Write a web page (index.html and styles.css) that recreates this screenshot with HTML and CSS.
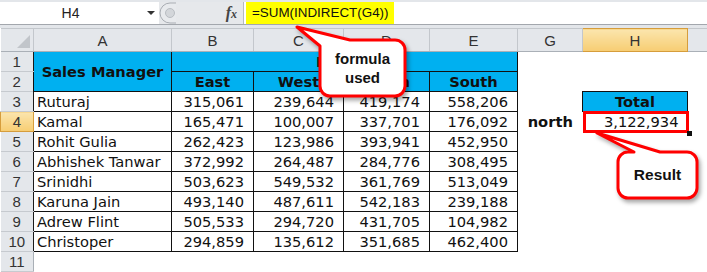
FILE: index.html
```html
<!DOCTYPE html>
<html lang="en">

<head>
    <meta charset="utf-8">
    <title>INDIRECT</title>
    <link rel="stylesheet" href="styles.css">
</head>

<body>

    <div class="bar">
        <div class="fline">
            <div class="namebox">
                <span class="ref">H4</span>
                <span class="drop"></span>
            </div>
            <div class="split">
                <svg class="grip" width="18" height="22" viewBox="0 0 18 22">
                    <path d="M17 1 H11 A10 10 0 0 0 11 21 H17" fill="#e8eaed" stroke="#a9adb3" />
                    <circle cx="11" cy="11" r="4.5" fill="#d3d6da" stroke="#b9bdc2" />
                </svg>
                <span class="fx">f<small>x</small></span>
            </div>
            <div class="finput"><span class="hl">=SUM(INDIRECT(G4))</span></div>
        </div>
    </div>

    <table class="sheet">
        <colgroup>
            <col class="c-rh">
            <col class="c-a">
            <col class="c-b">
            <col class="c-c">
            <col class="c-d">
            <col class="c-e">
            <col class="c-g">
            <col class="c-h">
            <col class="c-i">
        </colgroup>
        <thead>
            <tr class="colhead">
                <th class="corner"></th>
                <th>A</th>
                <th>B</th>
                <th>C</th>
                <th>D</th>
                <th>E</th>
                <th>G</th>
                <th class="sel">H</th>
                <th></th>
            </tr>
        </thead>
        <tbody>
            <tr>
                <th>1</th>
                <td class="hdr" rowspan="2">Sales Manager</td>
                <td class="hdr" colspan="4">Region</td>
                <td></td><td></td><td></td>
            </tr>
            <tr>
                <th>2</th>
                <td class="hdr">East</td>
                <td class="hdr">West</td>
                <td class="hdr">North</td>
                <td class="hdr">South</td>
                <td></td><td></td><td></td>
            </tr>
            <tr>
                <th>3</th>
                <td class="name">Ruturaj</td>
                <td class="num">315,061</td>
                <td class="num">239,644</td>
                <td class="num">419,174</td>
                <td class="num">558,206</td>
                <td></td>
                <td class="hdr total">Total</td>
                <td></td>
            </tr>
            <tr>
                <th class="sel">4</th>
                <td class="name">Kamal</td>
                <td class="num">165,471</td>
                <td class="num">100,007</td>
                <td class="num">337,701</td>
                <td class="num">176,092</td>
                <td class="lbl">north</td>
                <td class="free result">3,122,934</td>
                <td></td>
            </tr>
            <tr>
                <th>5</th>
                <td class="name">Rohit Gulia</td>
                <td class="num">262,423</td>
                <td class="num">123,986</td>
                <td class="num">393,941</td>
                <td class="num">452,950</td>
                <td></td><td></td><td></td>
            </tr>
            <tr>
                <th>6</th>
                <td class="name">Abhishek Tanwar</td>
                <td class="num">372,992</td>
                <td class="num">264,487</td>
                <td class="num">284,776</td>
                <td class="num">308,495</td>
                <td></td><td></td><td></td>
            </tr>
            <tr>
                <th>7</th>
                <td class="name">Srinidhi</td>
                <td class="num">503,623</td>
                <td class="num">549,532</td>
                <td class="num">361,769</td>
                <td class="num">513,049</td>
                <td></td><td></td><td></td>
            </tr>
            <tr>
                <th>8</th>
                <td class="name">Karuna Jain</td>
                <td class="num">493,140</td>
                <td class="num">487,611</td>
                <td class="num">542,183</td>
                <td class="num">239,188</td>
                <td></td><td></td><td></td>
            </tr>
            <tr>
                <th>9</th>
                <td class="name">Adrew Flint</td>
                <td class="num">505,533</td>
                <td class="num">294,720</td>
                <td class="num">431,705</td>
                <td class="num">104,982</td>
                <td></td><td></td><td></td>
            </tr>
            <tr>
                <th>10</th>
                <td class="name">Christoper</td>
                <td class="num">294,859</td>
                <td class="num">135,612</td>
                <td class="num">351,685</td>
                <td class="num">462,400</td>
                <td></td><td></td><td></td>
            </tr>
            <tr class="empty">
                <th>11</th>
                <td></td><td></td><td></td><td></td><td></td><td></td><td></td><td></td>
            </tr>
        </tbody>
    </table>

    <!-- callouts drawn over the sheet -->
    <svg class="callouts" width="707" height="272" viewBox="0 0 707 272">
        <path d="M297 27 L350 40 H395 A10 10 0 0 1 405 50 V86 A10 10 0 0 1 395 96 H330 A10 10 0 0 1 320 86 V46 Z" />
        <path d="M597 133 L660 152 H687 A10 10 0 0 1 697 162 V188 A10 10 0 0 1 687 198 H628 A10 10 0 0 1 618 188 V162 A10 10 0 0 1 628 152 H634 Z" />
    </svg>
    <div class="note note_formula">formula<br>used</div>
    <div class="note note_result">Result</div>

</body>

</html>
```

FILE: styles.css
```css
* {
    box-sizing: border-box;
}

body {
    margin: 0;
    width: 707px;
    height: 272px;
    overflow: hidden;
    position: relative;
    background-color: white;
    font-family: "DejaVu Sans", Verdana, sans-serif;
}

/* formula bar */

.bar {
    height: 28px;
    padding-top: 2px;
    background-color: #e3e6ea;
}

.fline {
    display: flex;
    height: 23px;
    border-bottom: 1px solid #a3a7ad;
    background-color: #eef0f2;
}

.namebox {
    width: 159px;
    display: flex;
    align-items: center;
    background-color: white;
    font-family: "Liberation Sans", Arial, sans-serif;
    font-size: 14px;
    color: #222;
}

.ref {
    width: 141px;
    text-align: center;
}

.drop {
    width: 0;
    height: 0;
    margin-left: 6px;
    border-left: 4px solid transparent;
    border-right: 4px solid transparent;
    border-top: 4px solid #333;
}

.split {
    width: 84px;
    display: flex;
    align-items: center;
    justify-content: space-between;
    padding-right: 6px;
    background-color: #e6e8eb;
}

.grip {
    display: block;
}

.fx {
    font-family: "Liberation Serif", "Times New Roman", serif;
    font-style: italic;
    font-weight: bold;
    font-size: 16px;
    color: #444;
}

.fx small {
    font-size: 12px;
}

.finput {
    flex: 1;
    padding-left: 2px;
    background-color: white;
    border-left: 1px solid #b5b9be;
}

.hl {
    display: inline-block;
    width: 148px;
    height: 22px;
    line-height: 22px;
    padding-left: 6px;
    background-color: #ffff00;
    font-family: "Liberation Sans", Arial, sans-serif;
    font-size: 13.4px;
    color: #111;
}

/* sheet */

.sheet {
    border-collapse: collapse;
    table-layout: fixed;
    width: 707px;
    font-size: 14.67px;
    color: #111;
}

.c-rh { width: 33px; }
.c-a { width: 138px; }
.c-b { width: 82px; }
.c-c { width: 90px; }
.c-d { width: 86px; }
.c-e { width: 88px; }
.c-g { width: 65px; }
.c-h { width: 105px; }
.c-i { width: 20px; }

.sheet th {
    padding: 0;
    font-weight: normal;
    font-family: "Liberation Sans", Arial, sans-serif;
    font-size: 15px;
    color: #333;
    background-color: #e4e7eb;
}

.colhead th {
    height: 23px;
    border-top: 1px solid #c3c7cc;
    border-right: 1px solid #c3c7cc;
    border-bottom: 1px solid #aab0b7;
}

.colhead .corner {
    position: relative;
}

.corner::after {
    content: "";
    position: absolute;
    right: 3px;
    bottom: 3px;
    border-left: 13px solid transparent;
    border-bottom: 13px solid #c1c5ca;
}

.sheet tbody tr {
    height: 20px;
}

.sheet tbody th {
    border-right: 1px solid #1a1a1a;
    border-bottom: 1px solid #c6cacf;
}

.sheet .empty th {
    border-right: 1px solid #a9afb6;
}

.sheet th.sel {
    background: linear-gradient(#fbe5ad, #f7cd72);
    border: 1px solid #d69d3c;
}

.sheet td {
    padding: 0;
    height: 20px;
    line-height: 18px;
    white-space: nowrap;
    overflow: hidden;
}

.hdr {
    background-color: #00b0f0;
    border: 1px solid #111;
    font-weight: bold;
    text-align: center;
}

.name {
    padding-left: 3px !important;
    border: 1px solid #111;
}

.num {
    padding-right: 9px !important;
    border: 1px solid #111;
    text-align: right;
}

.lbl {
    font-weight: bold;
    text-align: center;
}

.free {
    text-align: right;
    padding-right: 9px !important;
}

.result {
    position: relative;
    overflow: visible !important;
}

.result::after {
    content: "";
    position: absolute;
    left: 0;
    top: -1px;
    right: -1px;
    bottom: -1px;
    border: 3px solid #ff0000;
}

.result::before {
    content: "";
    position: absolute;
    right: -4px;
    bottom: -4px;
    width: 5px;
    height: 5px;
    background-color: #111;
    z-index: 1;
}

/* callouts */

.callouts {
    position: absolute;
    left: 0;
    top: 0;
    overflow: visible;
}

.callouts path {
    fill: white;
    stroke: #ff0000;
    stroke-width: 3;
    stroke-linejoin: round;
    filter: drop-shadow(2px 3px 2px rgba(0, 0, 0, 0.35));
}

.note {
    position: absolute;
    font-family: "Liberation Sans", Arial, sans-serif;
    font-weight: bold;
    font-size: 15px;
    line-height: 19px;
    text-align: center;
    color: #111;
}

.note_formula {
    left: 320px;
    top: 49px;
    width: 85px;
}

.note_result {
    left: 618px;
    top: 165px;
    width: 79px;
    font-size: 15.5px;
}
```
